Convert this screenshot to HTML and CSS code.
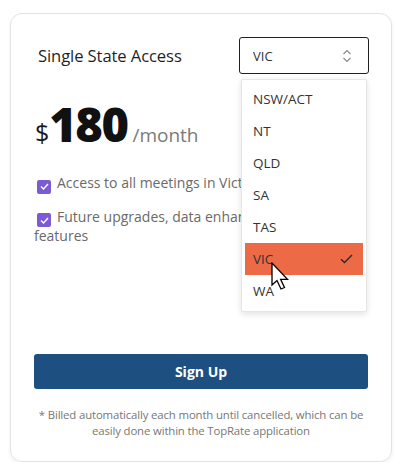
FILE: index.html
```html
<!DOCTYPE html>
<html>
<head>
<meta charset="utf-8">
<link rel="stylesheet" href="styles.css">
</head>
<body>
<div class="card">
  <div class="head">
    <div class="title">Single State Access</div>
    <div class="select-wrap">
      <div class="select">
        <span>VIC</span>
        <svg class="chev" width="10" height="14" viewBox="0 0 10 14"><path d="M1.5 5 L5 1.5 L8.5 5 M1.5 9 L5 12.5 L8.5 9" fill="none" stroke="#8a8a8a" stroke-width="1.2"/></svg>
      </div>
      <div class="menu">
        <div class="opt">NSW/ACT</div>
        <div class="opt">NT</div>
        <div class="opt">QLD</div>
        <div class="opt">SA</div>
        <div class="opt">TAS</div>
        <div class="opt sel"><span>VIC</span><svg width="13" height="10" viewBox="0 0 13 10"><path d="M1 5.2 L4.5 8.5 L12 1" fill="none" stroke="#2a2a2a" stroke-width="1.4"/></svg></div>
        <div class="opt">WA</div>
        <svg class="cursor" width="20" height="28" viewBox="0 0 20 28"><path d="M1 1 L1 23 L6 18.5 L10 27 L13.5 25.5 L9.6 17.3 L16.5 17.3 Z" fill="#fff" stroke="#000" stroke-width="1.3" stroke-linejoin="miter"/></svg>
      </div>
    </div>
  </div>
  <div class="price">
    <span class="cur">$</span><span class="amt">180</span><span class="per">/month</span>
  </div>
  <ul class="feats">
    <li><span class="cb"><svg width="9" height="7" viewBox="0 0 9 7"><path d="M1 3.5 L3.5 6 L8 1" fill="none" stroke="#fff" stroke-width="1.4"/></svg></span>Access to all meetings in Victoria</li>
    <li><span class="cb"><svg width="9" height="7" viewBox="0 0 9 7"><path d="M1 3.5 L3.5 6 L8 1" fill="none" stroke="#fff" stroke-width="1.4"/></svg></span>Future upgrades, data enhancements and new features</li>
  </ul>
  <button class="btn">Sign Up</button>
  <p class="note">* Billed automatically each month until cancelled, which can be easily done within the TopRate application</p>
</div>
</body>
</html>
```
FILE: styles.css
```css
* { box-sizing: border-box; }
html, body { margin: 0; padding: 0; background: #fff; }
body { font-family: "Open Sans", "Noto Sans", sans-serif; color: #222; }
.card {
  margin: 13px 0 0 10px;
  width: 382px;
  height: 449px;
  border: 1px solid #e3e3e3;
  border-radius: 12px;
  box-shadow: 0 2px 4px rgba(0,0,0,0.06);
  padding: 23px 23px 0 23px;
  display: flex;
  flex-direction: column;
}
.head {
  display: flex;
  align-items: center;
  justify-content: space-between;
  height: 37px;
}
.title {
  font-size: 16.6px;
  padding-left: 4px;
  color: #1f1f1f;
  letter-spacing: -0.1px;
}
.select-wrap { position: relative; margin-right: -1px; }
.select {
  width: 130px;
  height: 37px;
  border: 1px solid #1f1f1f;
  border-radius: 3px;
  display: flex;
  align-items: center;
  justify-content: space-between;
  padding: 0 16px 0 13px;
  font-size: 13px;
  color: #333;
}
.chev { display: block; }
.menu {
  position: absolute;
  top: 42px;
  left: 2px;
  width: 126px;
  height: 233px;
  background: #fff;
  border: 1px solid #e6e6e6;
  border-radius: 2px;
  box-shadow: 0 2px 6px rgba(0,0,0,0.12);
  padding: 3px 3px;
  z-index: 5;
}
.opt {
  height: 32px;
  display: flex;
  align-items: center;
  justify-content: space-between;
  padding: 0 10px 0 8px;
  font-size: 13.5px;
  color: #333;
}
.opt.sel { background: #ec6a45; }
.cursor { position: absolute; left: 29px; top: 182px; }
.price {
  display: flex;
  align-items: baseline;
  margin-top: 24px;
  height: 52px;
  padding-left: 1px;
}
.cur { font-size: 25px; color: #1a1a1a; margin-right: 0; }
.amt { font-size: 47px; font-weight: 800; color: #111; letter-spacing: -1.5px; line-height: 52px; }
.per { font-size: 19px; color: #7a7a7a; margin-left: 5px; }
.feats {
  list-style: none;
  margin: 24px 0 0 0;
  padding: 0;
  font-size: 14px;
  color: #6a6a6a;
  line-height: 18px;
}
.feats li { margin-bottom: 14px; }
.cb {
  display: inline-flex;
  align-items: center;
  justify-content: center;
  width: 14px;
  height: 14px;
  background: #7b5bd3;
  border-radius: 2px;
  margin: 0 6px 0 3px;
  vertical-align: -2px;
}
.cb svg { display: block; }
.btn {
  margin-top: auto;
  height: 35px;
  width: 100%;
  border: none;
  border-radius: 3px;
  background: #1d4f80;
  color: #fff;
  font-family: inherit;
  font-weight: 700;
  font-size: 14px;
}
.note {
  margin: 18px -2px 22px;
  text-align: center;
  font-size: 11.4px;
  letter-spacing: -0.15px;
  line-height: 16px;
  color: #777;
}
```
